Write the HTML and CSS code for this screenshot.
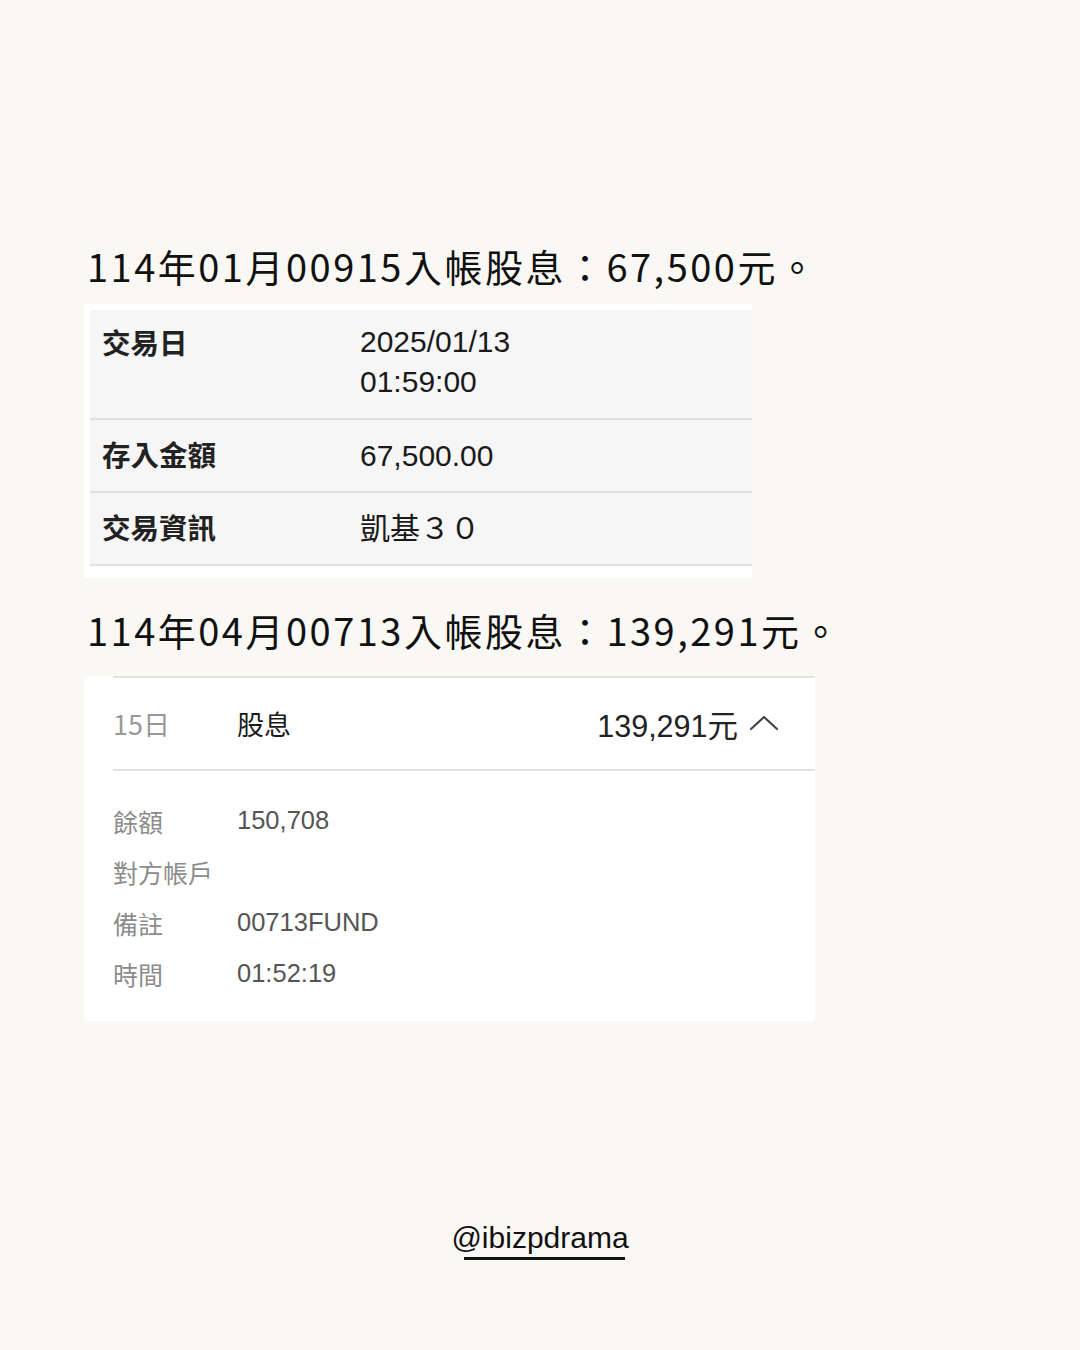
FILE: index.html
```html
<!DOCTYPE html>
<html lang="zh-Hant">
<head>
  <meta charset="UTF-8" />
  <meta name="viewport" content="width=device-width, initial-scale=1.0"/>
  <title>入帳股息</title>
  <link rel="stylesheet" href="styles.css">
</head>
<body>

  <main class="page">
    <h2 class="headline">114年01月00915入帳股息：67,500元。</h2>

    <div class="tx-table">
      <div class="tx-row tx-row-tall">
        <span class="tx-label">交易日</span>
        <span class="tx-value">2025/01/13<br>01:59:00</span>
      </div>
      <div class="tx-row">
        <span class="tx-label">存入金額</span>
        <span class="tx-value">67,500.00</span>
      </div>
      <div class="tx-row">
        <span class="tx-label">交易資訊</span>
        <span class="tx-value">凱基３０</span>
      </div>
    </div>

    <h2 class="headline headline-second">114年04月00713入帳股息：139,291元。</h2>

    <div class="ledger">
      <div class="ledger-head">
        <span class="ledger-day">15日</span>
        <span class="ledger-type">股息</span>
        <span class="ledger-amount">139,291元</span>
        <svg class="chevron" width="30" height="16" viewBox="0 0 30 16">
          <path d="M2 14 L15 2 L28 14" fill="none" stroke="#444" stroke-width="2.2" stroke-linecap="round" stroke-linejoin="round"/>
        </svg>
      </div>
      <dl class="ledger-detail">
        <div class="detail-row"><dt>餘額</dt><dd>150,708</dd></div>
        <div class="detail-row"><dt>對方帳戶</dt><dd></dd></div>
        <div class="detail-row"><dt>備註</dt><dd>00713FUND</dd></div>
        <div class="detail-row"><dt>時間</dt><dd>01:52:19</dd></div>
      </dl>
    </div>
  </main>

  <footer class="credit">
    <span class="handle">@ibizpdrama</span>
    <span class="handle-line"></span>
  </footer>

</body>
</html>
```

FILE: styles.css
```css
body {
  margin: 0;
  background-color: #faf8f4;
  color: #111;
  font-family: "Noto Sans CJK TC", "Liberation Sans", sans-serif;
}

.page {
  width: 1080px;
  padding: 240px 0 0 84px;
  box-sizing: border-box;
}

.headline {
  margin: 0 0 12px 3px;
  font-size: 38px;
  font-weight: 400;
  line-height: 52px;
  letter-spacing: 2.5px;
  color: #111;
}

.headline-second {
  margin-top: 26px;
  margin-bottom: 20px;
}

/* first screenshot: bank detail table */
.tx-table {
  width: 668px;
  background-color: #ffffff;
  padding: 6px 0 12px 6px;
  box-sizing: border-box;
}

.tx-row {
  display: flex;
  align-items: center;
  height: 73px;
  background-color: #f6f6f6;
  border-bottom: 2px solid #e0e0e0;
  box-sizing: border-box;
}

.tx-row-tall {
  height: 110px;
  align-items: flex-start;
  padding-top: 12px;
}

.tx-label {
  width: 258px;
  padding: 0 0 4px 12px;
  font-size: 28.5px;
  font-weight: 700;
  color: #222;
  line-height: 40px;
}

.tx-value {
  font-family: "Liberation Sans", "Noto Sans CJK TC", sans-serif;
  font-size: 30px;
  color: #1a1a1a;
  line-height: 40px;
}

/* second screenshot: ledger card */
.ledger {
  width: 731px;
  background-color: #ffffff;
  padding: 0 0 22px 29px;
  box-sizing: border-box;
}

.ledger-head {
  display: flex;
  align-items: center;
  height: 95px;
  border-top: 2px solid #e2e2e2;
  border-bottom: 2px solid #e2e2e2;
  box-sizing: border-box;
}

.ledger-day {
  width: 124px;
  font-size: 27px;
  color: #999;
}

.ledger-type {
  flex: 1;
  font-size: 27px;
  color: #1a1a1a;
}

.ledger-amount {
  font-family: "Liberation Sans", "Noto Sans CJK TC", sans-serif;
  font-size: 30.5px;
  color: #222;
}

.chevron {
  margin: 0 36px 2px 11px;
}

.ledger-detail {
  margin: 0;
  padding-top: 24px;
}

.detail-row {
  display: flex;
  align-items: center;
  height: 51px;
}

.detail-row dt {
  width: 124px;
  font-size: 25px;
  color: #8c8c8c;
}

.detail-row dd {
  margin: 0;
  font-family: "Liberation Sans", "Noto Sans CJK TC", sans-serif;
  font-size: 25.5px;
  color: #555;
}

.credit {
  display: flex;
  flex-direction: column;
  align-items: center;
  margin-top: 199px;
}

.handle {
  font-family: "Liberation Sans", sans-serif;
  font-size: 30px;
  color: #111;
  line-height: 36px;
}

.handle-line {
  width: 161px;
  height: 3px;
  margin: 1px 0 0 9px;
  background-color: #111;
}
```
